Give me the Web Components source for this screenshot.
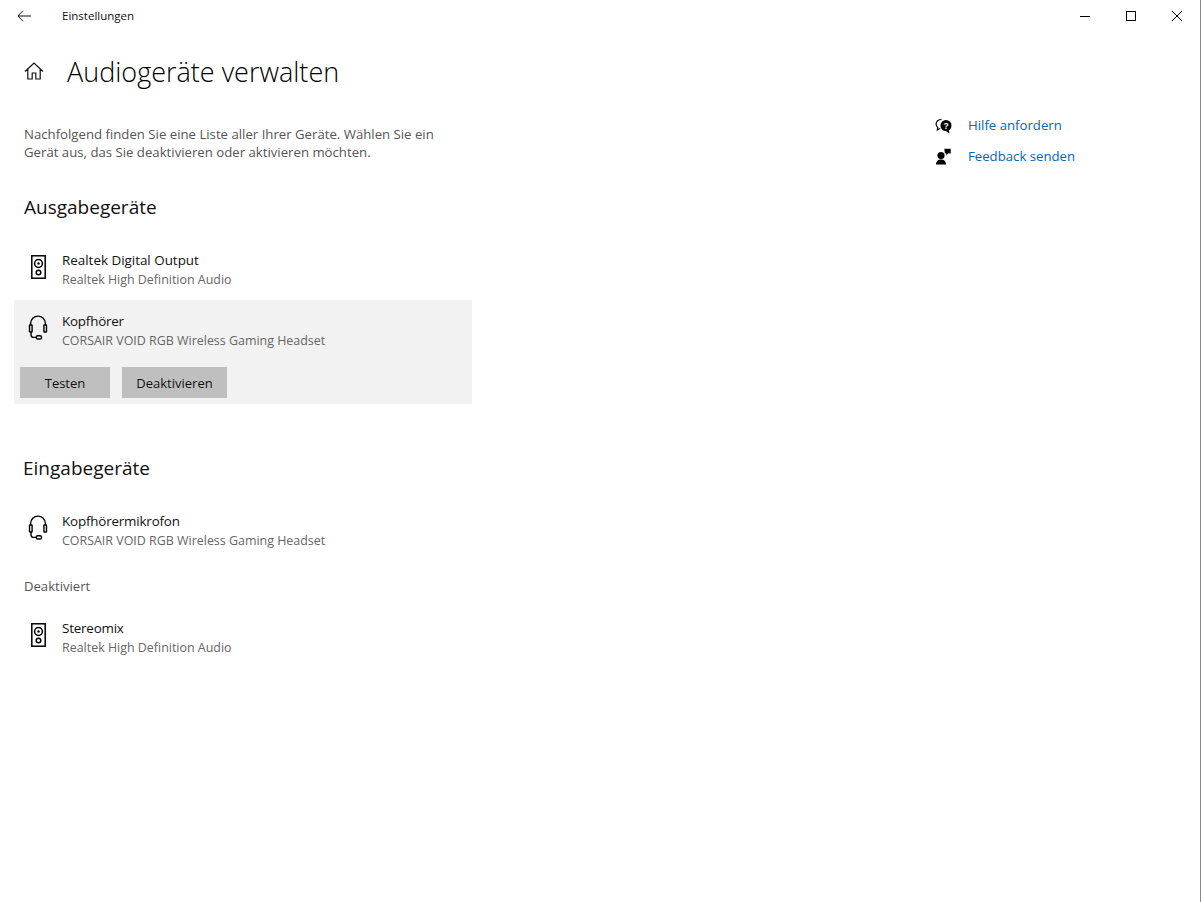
<!DOCTYPE html>
<html lang="de"><head><meta charset="utf-8"><title>Einstellungen</title>
<style>
html,body{margin:0;padding:0;background:#fff;height:100%;overflow:hidden}
body{font-family:"Open Sans","Noto Sans",sans-serif;color:#000}
</style></head><body>
<settings-window>
  <title-bar slot="top">Einstellungen</title-bar>
  <page-head slot="top">Audiogeräte verwalten</page-head>
  <intro-text>Nachfolgend finden Sie eine Liste aller Ihrer Geräte. Wählen Sie ein Gerät aus, das Sie deaktivieren oder aktivieren möchten.</intro-text>
  <section-title style="margin-top:33px">Ausgabegeräte</section-title>
  <device-row icon="speaker" name="Realtek Digital Output" sub="Realtek High Definition Audio" style="margin-top:30px"></device-row>
  <device-row icon="headset" name="Kopfhörer" sub="CORSAIR VOID RGB Wireless Gaming Headset" selected style="--name-ls:-.2px">
    <flat-button style="width:90px">Testen</flat-button>
    <flat-button style="width:105px">Deaktivieren</flat-button>
  </device-row>
  <section-title style="margin-top:51px;margin-left:9px">Eingabegeräte</section-title>
  <device-row icon="headset" name="Kopfhörermikrofon" sub="CORSAIR VOID RGB Wireless Gaming Headset" style="margin-top:30px;--name-ls:-.18px"></device-row>
  <group-label>Deaktiviert</group-label>
  <device-row icon="speaker" name="Stereomix" sub="Realtek High Definition Audio" style="margin-top:23px;--name-ls:-.2px"></device-row>
  <help-links slot="aside"></help-links>
</settings-window>
<script>
const ICONS={
 speaker:`<svg width="15" height="24" viewBox="0 0 15 24" fill="none" stroke="#000" stroke-width="1.5"><rect x=".8" y=".8" width="13.4" height="22.400"/><circle cx="7.500" cy="8.500" r="3.900"/><circle cx="7.500" cy="8.500" r="1.200" fill="#000" stroke="none"/><circle cx="7.500" cy="17.500" r="2.300"/></svg>`,
 headset:`<svg width="20" height="26" viewBox="0 0 20 26" fill="none" stroke="#000" stroke-width="1.400"><path d="M2.600 11V9.500a7.400 7.400 0 0 1 14.800 0V11"/><rect x="1.500" y="11" width="2.600" height="7" rx=".5"/><rect x="15.900" y="11" width="2.600" height="7" rx=".5"/><path d="M3 18v3a2.500 2.500 0 0 0 2.500 2.400h2.700"/><rect x="8.200" y="21.800" width="5.400" height="3.200" rx="1.600"/></svg>`
};
function def(name,html){customElements.define(name,class extends HTMLElement{
  constructor(){super();this.attachShadow({mode:"open"}).innerHTML=typeof html==="function"?html(this):html}
})}
def("settings-window",`<style>
:host{display:block;width:1201px;height:902px;box-sizing:border-box;border-right:1px solid #8a8a8a}
.main{display:flex;justify-content:space-between}
.col{width:458px;padding:14px 0 0 14px;display:flex;flex-direction:column}
.aside{width:265px;padding-top:3px}
</style><slot name="top"></slot><div class="main"><div class="col"><slot></slot></div><div class="aside"><slot name="aside"></slot></div></div>`);
def("title-bar",`<style>
:host{display:flex;align-items:center;height:31px;font-size:11.500px;color:#111}
.back{width:62px;padding-left:17px;box-sizing:border-box;display:flex}
.t{flex:1}
.ctl{width:46px;height:31px;display:flex;align-items:center;justify-content:center}
</style>
<div class="back"><svg width="14" height="12" viewBox="0 0 14 12" fill="none" stroke="#111" stroke-width="1"><path d="M14 6H1M6 .8 .9 6 6 11.200"/></svg></div>
<div class="t"><slot></slot></div>
<div class="ctl"><svg width="10" height="10" viewBox="0 0 10 10" stroke="#000" stroke-width="1"><path d="M0 5.500h10"/></svg></div>
<div class="ctl"><svg width="10" height="10" viewBox="0 0 10 10" fill="none" stroke="#000" stroke-width="1"><rect x=".5" y=".5" width="9" height="9"/></svg></div>
<div class="ctl"><svg width="10" height="10" viewBox="0 0 10 10" stroke="#000" stroke-width="1"><path d="M0 0l10 10M10 0 0 10"/></svg></div>`);
def("page-head",`<style>
:host{display:flex;align-items:center;height:80px;padding-left:24px;box-sizing:border-box;font-size:27px;font-weight:300;color:#000}
.i{width:43px;display:flex}
</style><div class="i"><svg width="20" height="20" viewBox="0 0 20 20" fill="none" stroke="#111" stroke-width="1.200"><path d="M1 10.500 10 2l9 8.500M3.800 8v10h4.400v-6h3.600v6h4.400V8"/></svg></div><div><slot></slot></div>`);
def("intro-text",`<style>:host{display:block;margin-left:10px;width:425px;font-size:13.200px;line-height:18px;color:#555}</style><slot></slot>`);
def("section-title",`<style>:host{display:block;margin-left:10px;font-size:19px;line-height:26px;color:#111}</style><slot></slot>`);
def("group-label",`<style>:host{display:block;margin:16px 0 0 10px;font-size:13.100px;line-height:18px;color:#555}</style><slot></slot>`);
def("flat-button",`<style>:host{display:flex;align-items:center;justify-content:center;height:31px;background:#bfbfbf;font-size:13px;color:#111}</style><slot></slot>`);
def("device-row",el=>{const sel=el.hasAttribute("selected");const ic=el.getAttribute("icon");return `<style>
:host{display:block}
.box{padding:${sel?"11px 0 6px":"0 0 10px"};${sel?"background:#f2f2f2;":""}}
.r{display:flex;height:40px;align-items:center;${sel?"margin-bottom:16px;":""}}
.i{width:48px;display:flex;justify-content:center;margin-bottom:${ic==="headset"?8:6}px}
.n{font-size:13.400px;line-height:19px;color:#111;letter-spacing:var(--name-ls,0)}
.s{font-size:12.450px;line-height:19px;color:#666}
.a{display:flex;gap:12px;padding-left:6px}
</style><div class="box"><div class="r"><div class="i">${ICONS[ic]}</div><div><div class="n">${el.getAttribute("name")}</div><div class="s">${el.getAttribute("sub")}</div></div></div>
${sel?'<div class="a"><slot></slot></div>':''}</div>`});
def("help-links",`<style>
:host{display:flex;flex-direction:column;gap:9px;font-size:13.200px;color:#0067b8}
.l{display:flex;align-items:center;height:22px;gap:16px}
svg{display:block;width:17px;height:17px}
</style>
<div class="l"><svg viewBox="0 0 17 17"><path d="M6.500 2.500C3.400 2.500 1.100 4.300 1.100 7c0 1.400.6 2.600 1.700 3.400l-.5 2.600 2.900-1.500" fill="none" stroke="#000" stroke-width="1.200"/><circle cx="11" cy="8.500" r="5.500" fill="#000"/><path d="M14.500 16.500 10 13.500h4z" fill="#000"/><text x="11" y="11.600" font-size="8.500" font-weight="700" fill="#fff" text-anchor="middle" font-family="Liberation Sans">?</text></svg><span>Hilfe anfordern</span></div>
<div class="l"><svg viewBox="0 0 17 17"><circle cx="6" cy="7.500" r="3.600" fill="#000"/><path d="M1 16.500c0-3.500 2-5 5-5s5 1.500 5 5z" fill="#000"/><path d="M9 .5h7v5.200h-3L11 7.800V5.700H9.600z" fill="#000" stroke="#fff" stroke-width=".6"/></svg><span>Feedback senden</span></div>`);
</script>
</body></html>
